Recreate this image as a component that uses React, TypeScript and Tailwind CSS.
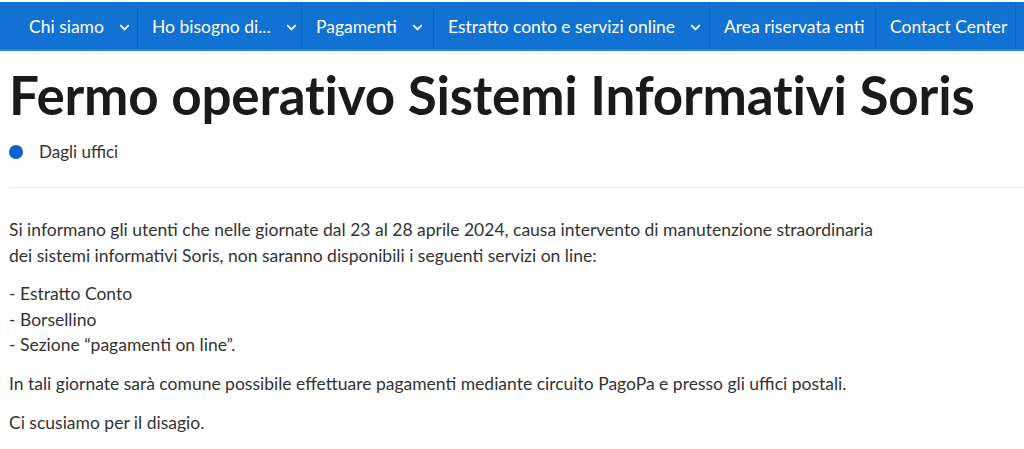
import { ChevronDown } from 'lucide-react';

const navItems = [
  { label: 'Chi siamo', drop: true, w: 'w-[123px]' },
  { label: 'Ho bisogno di...', drop: true, w: 'w-[164px]' },
  { label: 'Pagamenti', drop: true, w: 'w-[132px]' },
  { label: 'Estratto conto e servizi online', drop: true, w: 'w-[276px]' },
  { label: 'Area riservata enti', drop: false, w: 'w-[166px]' },
  { label: 'Contact Center', drop: false, w: 'w-[140px]' },
];

export default function App() {
  return (
    <div className="min-h-screen bg-white font-['Lato',sans-serif] text-[#333]">
      {/* Top nav */}
      <nav className="mt-[2px] h-[49px] bg-[#1172d4] border-b-2 border-[#2a83dc] flex pl-[15px]">
        {navItems.map((item) => (
          <a
            key={item.label}
            href="#"
            className={`${item.w} shrink-0 h-full flex items-center pt-[3px] pl-[14px] pr-[10px] gap-[13px] text-white text-[17.5px] border-r border-[#0d62bb]`}
          >
            <span className="whitespace-nowrap">{item.label}</span>
            {item.drop && <ChevronDown size={15} strokeWidth={3} className="shrink-0" />}
          </a>
        ))}
      </nav>

      <main className="pl-[9px]">
        <h1 className="mt-[14px] text-[53px] leading-[60px] font-bold text-[#1a1a1c] tracking-[-0.2px] whitespace-nowrap">
          Fermo operativo Sistemi Informativi Soris
        </h1>

        <div className="mt-[15px] flex items-center gap-[16px] h-[24px]">
          <span className="w-[14px] h-[14px] rounded-full bg-[#0b63cf]" />
          <span className="text-[17px]">Dagli uffici</span>
        </div>

        <div className="mt-[23px] border-t border-[#ebebeb]" />

        <div className="mt-[29px] text-[17.5px] leading-[25.5px]">
          <p className="mb-[13px]">
            Si informano gli utenti che nelle giornate dal 23 al 28 aprile 2024, causa intervento di manutenzione straordinaria
            <br />
            dei sistemi informativi Soris, non saranno disponibili i seguenti servizi on line:
          </p>
          <p className="mb-[13px]">
            - Estratto Conto
            <br />
            - Borsellino
            <br />
            - Sezione “pagamenti on line”.
          </p>
          <p className="mb-[14px]">
            In tali giornate sarà comune possibile effettuare pagamenti mediante circuito PagoPa e presso gli uffici postali.
          </p>
          <p>Ci scusiamo per il disagio.</p>
        </div>
      </main>
    </div>
  );
}
